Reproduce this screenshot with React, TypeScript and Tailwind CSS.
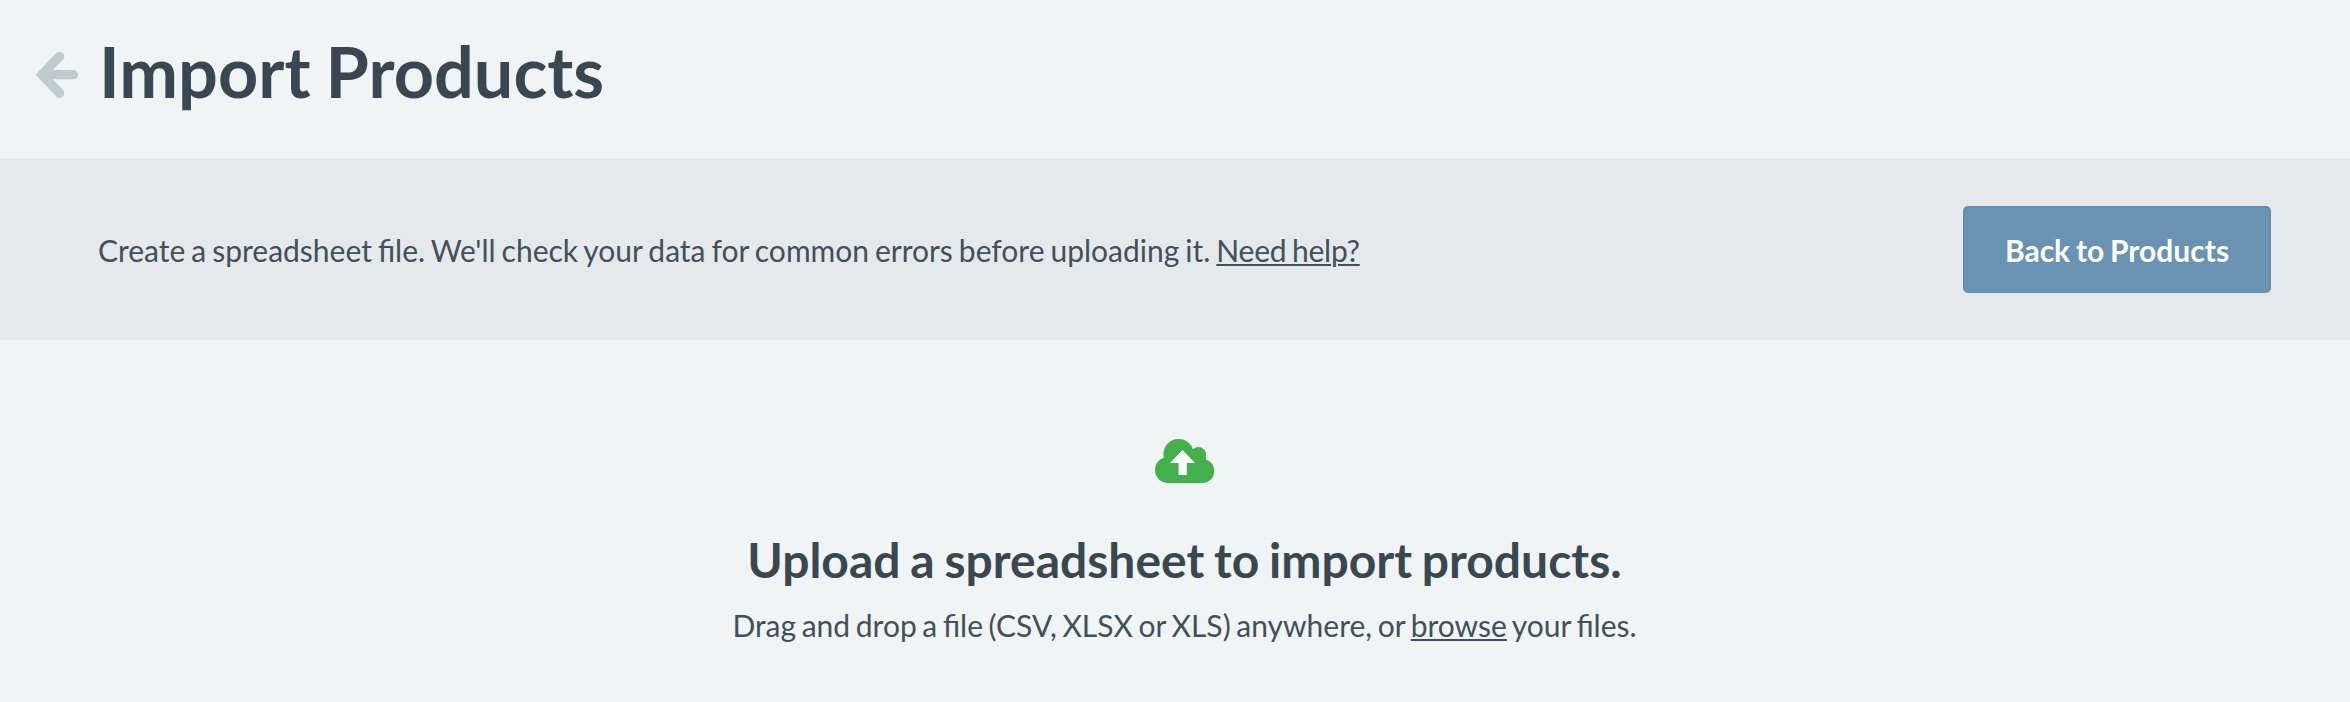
function BackArrow() {
  return (
    <svg viewBox="0 0 44 48" className="mt-[22px] h-[48px] w-[44px] shrink-0" fill="none" stroke="#becbd1" strokeWidth="9.3">
      <path d="M24.6 5.3 7 23.7l17.6 18.6" strokeLinecap="round" strokeLinejoin="miter" />
      <path d="M9 23.7h29.4" strokeLinecap="round" />
    </svg>
  );
}

function CloudUpload() {
  return (
    <svg viewBox="0 0 60 44" className="h-[44px] w-[60px]" fill="#43b04d">
      <circle cx="23.6" cy="15.2" r="15.2" />
      <circle cx="43.4" cy="15.6" r="7.7" />
      <circle cx="13" cy="31" r="13" />
      <circle cx="47.3" cy="32" r="12" />
      <path d="M13 18h38v6l-4 20H13z" />
      <path d="M27.5 11 40 24h-8.2v12h-8.2V24H15z" fill="#ffffff" />
    </svg>
  );
}

export default function App() {
  return (
    <div className="h-[702px] w-[2350px] overflow-hidden bg-[#f0f4f5] font-['Lato',sans-serif] text-[#41505b]">
      <header className="flex h-[159px] items-start pt-[29px] pl-[35px]">
        <BackArrow />
        <h1 className="ml-[20px] text-[70.2px] leading-[84px] font-bold text-[#384751] [word-spacing:-2px]">Import Products</h1>
      </header>
      <section className="flex h-[181px] items-center justify-between bg-[#e5e9ec] pr-[79px] pl-[98px]">
        <p className="text-[30px] leading-[40px] [word-spacing:-1.7px]">
          Create a spreadsheet file. We'll check your data for common errors before uploading it.{" "}
          <a className="tracking-[-0.25px] underline decoration-2 underline-offset-[2px]">Need help?</a>
        </p>
        <button className="h-[87px] w-[308px] rounded-[5px] border-2 border-[#628fb0] bg-[#6a92b3] text-[30px] leading-[40px] font-bold text-white [word-spacing:-1.5px]">
          Back to Products
        </button>
      </section>
      <main className="flex flex-col items-center pt-[99px] pl-[19px]">
        <CloudUpload />
        <h2 className="mt-[45px] text-[48px] leading-[64px] font-bold text-[#384751] [word-spacing:-1.9px]">
          Upload a spreadsheet to import products.
        </h2>
        <p className="mt-[13px] text-[30px] leading-[40px] [word-spacing:-2.05px]">
          Drag and drop a file (CSV, XLSX or XLS) anywhere, or{" "}
          <a className="underline decoration-2 underline-offset-[2px]">browse</a> your files.
        </p>
      </main>
    </div>
  );
}
